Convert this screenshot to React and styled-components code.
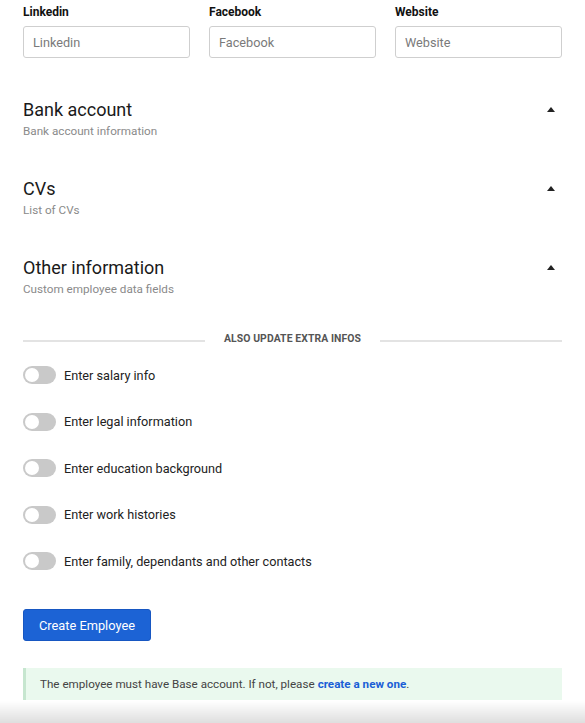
import React from "react";
import styled, { createGlobalStyle } from "styled-components";

const Global = createGlobalStyle`
  html, body { margin: 0; padding: 0; background: #fff; }
  body { font-family: Roboto, "Liberation Sans", Arial, sans-serif; color: #212121; }
  * { box-sizing: border-box; }
`;

const Page = styled.div`
  padding: 4px 23px 23px;
`;

const FieldRow = styled.div`
  display: grid;
  grid-template-columns: repeat(3, 1fr);
  column-gap: 19px;
`;

const Field = styled.div`
  display: flex;
  flex-direction: column;
  gap: 6px;
`;

const Label = styled.label`
  font-size: 12px;
  font-weight: 700;
  line-height: 16px;
  color: #111;
`;

const Input = styled.input`
  height: 32px;
  width: 100%;
  border: 1px solid #cfcfcf;
  border-radius: 3px;
  padding: 0 9px;
  font-family: inherit;
  font-size: 12.7px;
  color: #222;
  outline: none;
  &::placeholder { color: #7a7a7a; }
`;

const Sections = styled.div`
  margin-top: 40px;
  display: flex;
  flex-direction: column;
  gap: 39px;
`;

const Section = styled.div`
  display: flex;
  justify-content: space-between;
  align-items: flex-start;
`;

const SectionText = styled.div`
  display: flex;
  flex-direction: column;
  gap: 2px;
`;

const SectionTitle = styled.div`
  font-size: 18px;
  line-height: 24px;
  color: #1a1a1a;
`;

const SectionSub = styled.div`
  font-size: 11.7px;
  line-height: 14px;
  color: #8a8a8a;
`;

const Caret = styled.span`
  width: 0;
  height: 0;
  margin: 9px 7px 0 0;
  border-left: 4px solid transparent;
  border-right: 4px solid transparent;
  border-bottom: 5px solid #222;
`;

const Divider = styled.div`
  margin-top: 36px;
  display: flex;
  align-items: center;
  gap: 19px;
  &::before, &::after {
    content: "";
    flex: 1;
    height: 1.5px;
    background: #e3e3e3;
    margin-top: 4px;
  }
`;

const DividerText = styled.span`
  font-size: 10.4px;
  font-weight: 700;
  letter-spacing: 0.1px;
  color: #555;
  line-height: 14px;
`;

const Toggles = styled.div`
  margin-top: 20px;
  display: flex;
  flex-direction: column;
  gap: 28.5px;
`;

const ToggleRow = styled.label`
  display: flex;
  align-items: center;
  gap: 8px;
  height: 18px;
  font-size: 12.7px;
  color: #222;
`;

const Track = styled.span`
  position: relative;
  width: 33px;
  height: 18px;
  border-radius: 9px;
  background: ${(p) => (p.$on ? "#1c63d5" : "#c9c9c9")};
  flex-shrink: 0;
`;

const Knob = styled.span`
  position: absolute;
  top: 2px;
  left: ${(p) => (p.$on ? "17px" : "2px")};
  width: 14px;
  height: 14px;
  border-radius: 50%;
  background: #fff;
`;

const Button = styled.button`
  margin-top: 39px;
  height: 32px;
  padding: 0 15px;
  background: #1c63d5;
  color: #fff;
  border: 1px solid #1757c2;
  border-radius: 3px;
  font-family: inherit;
  font-size: 12.8px;
  font-weight: 400;
  align-self: flex-start;
`;

const Notice = styled.div`
  margin-top: 27px;
  height: 32px;
  display: flex;
  align-items: center;
  padding-left: 14px;
  background: #eaf9ee;
  border-left: 3px solid #c6e6cf;
  font-size: 11.65px;
  color: #444;
`;

const NoticeLink = styled.a`
  color: #1a5fd6;
  font-weight: 700;
  text-decoration: none;
  margin-left: 3px;
`;

const Column = styled.div`
  display: flex;
  flex-direction: column;
`;

const BottomFade = styled.div`
  position: fixed;
  left: 0;
  right: 0;
  bottom: 0;
  height: 22px;
  background: linear-gradient(to bottom, rgba(0,0,0,0), rgba(0,0,0,0.13));
  pointer-events: none;
`;

const fields = ["Linkedin", "Facebook", "Website"];
const sections = [
  ["Bank account", "Bank account information"],
  ["CVs", "List of CVs"],
  ["Other information", "Custom employee data fields"],
];
const toggles = [
  "Enter salary info",
  "Enter legal information",
  "Enter education background",
  "Enter work histories",
  "Enter family, dependants and other contacts",
];

export default function App() {
  return (
    <>
      <Global />
      <Page>
        <Column>
          <FieldRow>
            {fields.map((f) => (
              <Field key={f}>
                <Label>{f}</Label>
                <Input placeholder={f} />
              </Field>
            ))}
          </FieldRow>
          <Sections>
            {sections.map(([t, s]) => (
              <Section key={t}>
                <SectionText>
                  <SectionTitle>{t}</SectionTitle>
                  <SectionSub>{s}</SectionSub>
                </SectionText>
                <Caret />
              </Section>
            ))}
          </Sections>
          <Divider>
            <DividerText>ALSO UPDATE EXTRA INFOS</DividerText>
          </Divider>
          <Toggles>
            {toggles.map((t) => (
              <ToggleRow key={t}>
                <Track>
                  <Knob />
                </Track>
                {t}
              </ToggleRow>
            ))}
          </Toggles>
          <Button>Create Employee</Button>
          <Notice>
            The employee must have Base account. If not, please
            <NoticeLink href="#">create a new one</NoticeLink>.
          </Notice>
        </Column>
      </Page>
      <BottomFade />
    </>
  );
}
